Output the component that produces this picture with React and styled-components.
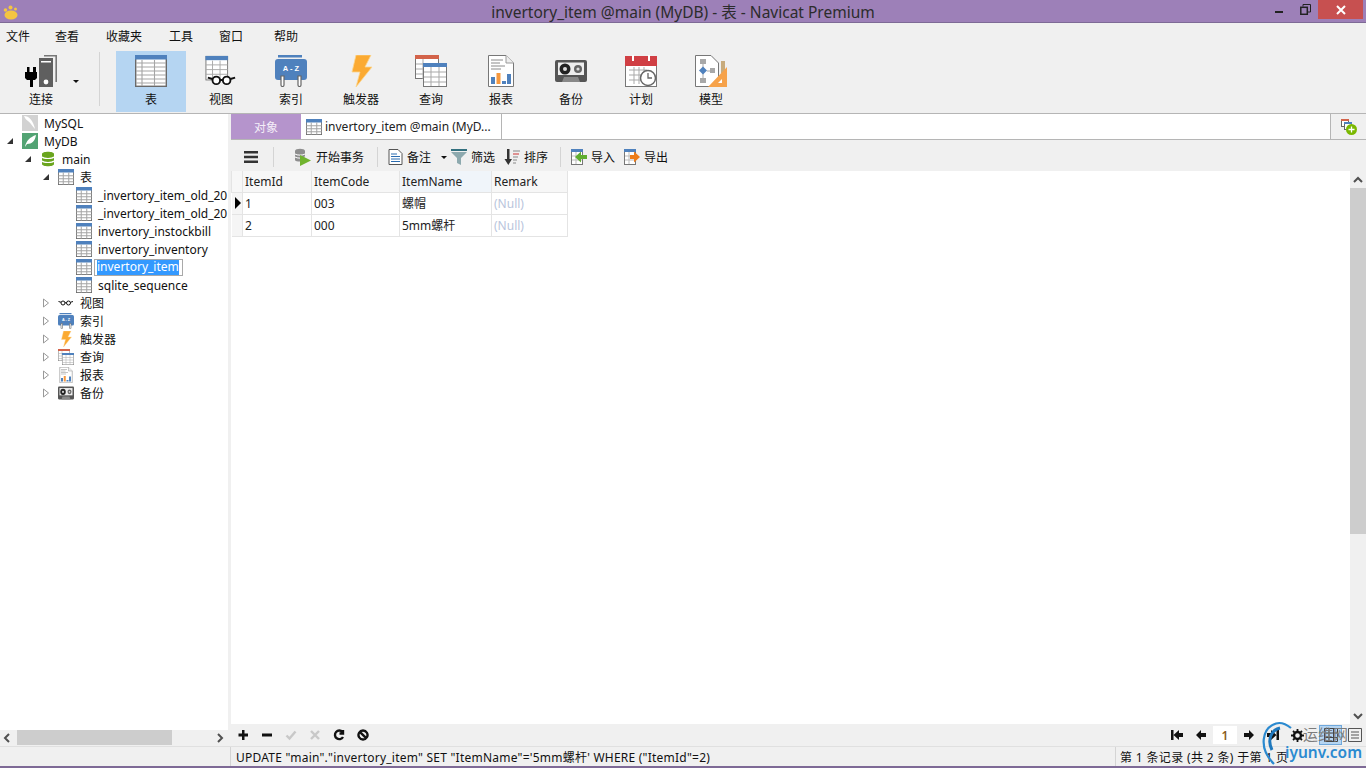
import React from "react";
import styled, { createGlobalStyle } from "styled-components";

const FONT = `"Noto Sans", "Noto Sans CJK SC", sans-serif`;

const Global = createGlobalStyle`
  html, body { margin: 0; padding: 0; background: #f0f0f0; }
  body { font-family: ${FONT}; font-size: 12px; color: #222; overflow: hidden; }
`;

/* ---------- drawn icons ---------- */

const TableIcon = ({ size = 32 }) => (
  <svg width={size} height={size} viewBox="0 0 32 32">
    <rect x="0.700" y="0.700" width="30.600" height="30.600" fill="#fff" stroke="#6a6a6a" strokeWidth={size > 20 ? 1.400 : 2} />
    <rect x="0" y="0" width="32" height={size > 20 ? 4.500 : 7} fill="#4f81bd" />
    {size > 20 ? (
      <path d="M1 8h30M1 12h30M1 16h30M1 20h30M1 24h30M1 28h30M7 5v26M19.500 5v26" stroke="#a5a5a5" strokeWidth="1.100" />
    ) : (
      <path d="M1 13.500h30M1 19.500h30M1 25.500h30M10.500 7v24M21.500 7v24" stroke="#a5a5a5" strokeWidth="2" />
    )}
  </svg>
);

const ViewIcon = ({ size = 32, glassesOnly }) => (
  <svg width={size} height={size} viewBox={glassesOnly ? "2 18 32 16" : "0 0 34 32"}>
    {!glassesOnly && (
      <g>
        <rect x="1" y="0.500" width="23" height="25" fill="#fff" stroke="#777" />
        <rect x="0.500" y="0" width="24" height="4.500" fill="#4f81bd" />
        <path d="M1 9.500h23M1 14.500h23M1 19.500h23M8 5v20M16 5v20" stroke="#a9a9a9" />
      </g>
    )}
    <circle cx="12" cy="26" r="4" fill="#fff" stroke="#111" strokeWidth="2" />
    <circle cx="23" cy="26" r="4" fill="#fff" stroke="#111" strokeWidth="2" />
    <path d="M3 23l5 1.500M16 25.500h3M27 24.500l5-1.500" stroke="#111" strokeWidth="2" />
  </svg>
);

const IndexIcon = ({ size = 32 }) => (
  <svg width={size} height={size} viewBox="0 0 32 32">
    <path d="M3 0h24v2.500H3z" fill="#4f81bd" />
    <rect x="0" y="4" width="32" height="21" rx="3" fill="#4f81bd" />
    <path d="M6 21v9a1.500 1.500 0 0 0 3 0v-9zM23 21v9a1.500 1.500 0 0 0 3 0v-9z" fill="#fff" stroke="#666" strokeWidth="1.200" />
    <text x="16" y="16" textAnchor="middle" fontSize="7.500" fontWeight="700" fill="#fff" fontFamily="Liberation Sans, sans-serif">A - Z</text>
  </svg>
);

const BoltIcon = ({ size = 32 }) => (
  <svg width={size} height={size} viewBox="0 0 32 32">
    <path d="M11 0h15l-6 12h7L11 32l4-15H7z" fill="#fbaa32" stroke="#fcd58e" strokeWidth="0.800" />
  </svg>
);

const QueryIcon = ({ size = 32 }) => (
  <svg width={size} height={size} viewBox="0 0 32 32">
    <rect x="0.500" y="0.500" width="23" height="23" fill="#fff" stroke="#777" />
    <rect x="0" y="0" width="24" height="4" fill="#d3634a" />
    <path d="M1 9h8M1 14h8M1 19h8M8 4v20" stroke="#a9a9a9" />
    <rect x="8.500" y="8.500" width="23" height="23" fill="#fff" stroke="#777" />
    <rect x="8" y="8" width="24" height="4" fill="#4f81bd" />
    <path d="M9 17h22M9 22h22M9 27h22M16 12v19M24 12v19" stroke="#a9a9a9" />
  </svg>
);

const ReportIcon = ({ size = 32 }) => (
  <svg width={size} height={size} viewBox="0 0 32 32">
    <path d="M3.500 0.500H21L28.500 8V31.500H3.500z" fill="#fff" stroke="#777" />
    <path d="M21 0.500V8H28.500" fill="#eee" stroke="#999" />
    <path d="M6 5h12M6 8h9M6 11h14M6 14h10" stroke="#8a8a8a" />
    <rect x="6" y="22" width="4" height="7" fill="#4f81bd" />
    <rect x="11.500" y="18" width="4" height="11" fill="#f6983e" />
    <rect x="17" y="26" width="4" height="3" fill="#4f81bd" />
    <rect x="22" y="19" width="4" height="10" fill="#4f81bd" />
  </svg>
);

const BackupIcon = ({ size = 32 }) => (
  <svg width={size} height={size === 32 ? 24 : 14} viewBox="0 0 32 24" preserveAspectRatio="none">
    <rect x="0" y="1" width="32" height="22" rx="2" fill="#555" />
    <rect x="3" y="3.500" width="26" height="12.500" fill="#eee" />
    <circle cx="10" cy="10" r="5.500" fill="#222" />
    <circle cx="10" cy="10" r="2" fill="#ddd" />
    <circle cx="23" cy="10" r="4" fill="#666" />
    <circle cx="23" cy="10" r="1.600" fill="#ddd" />
    <path d="M7 23l2-5h14l2 5z" fill="#888" />
  </svg>
);

const PlanIcon = ({ size = 32 }) => (
  <svg width={size} height={size} viewBox="0 0 32 32">
    <rect x="0.500" y="2" width="31" height="29.500" fill="#fff" stroke="#777" />
    <rect x="0" y="1" width="32" height="10" fill="#d03f44" />
    <rect x="7" y="0" width="2" height="6" fill="#fff" />
    <rect x="23" y="0" width="2" height="6" fill="#fff" />
    <path d="M4 15h18M4 20h14M4 25h14M9 12v17M14 12v17M19 12v8" stroke="#a9a9a9" />
    <circle cx="23" cy="23" r="7.500" fill="#fff" stroke="#666" strokeWidth="1.500" />
    <path d="M23 18v5h4" fill="none" stroke="#666" strokeWidth="1.300" />
  </svg>
);

const ModelIcon = ({ size = 32 }) => (
  <svg width={size} height={size} viewBox="0 0 32 32">
    <path d="M0.500 0.500H16L23.500 8V31.500H0.500z" fill="#fff" stroke="#777" />
    <rect x="5" y="4" width="6" height="5" fill="#a8a8a8" />
    <rect x="5" y="23" width="6" height="5" fill="#a8a8a8" />
    <rect x="15" y="13" width="5" height="5" fill="#a8a8a8" />
    <path d="M8 9v14M12 16h4" stroke="#a8a8a8" />
    <path d="M8 11.500l4 4-4 4-4-4z" fill="#4f81bd" />
    <rect x="26" y="6" width="4" height="12" fill="#c8ab7c" />
    <path d="M32 12V32H13z" fill="#f6a24a" />
    <path d="M27 24v4h-4z" fill="#fff" />
  </svg>
);

const ConnectIcon = () => (
  <svg width="32" height="32" viewBox="0 0 32 32">
    <path d="M19 .8h12.200V27" fill="none" stroke="#777" strokeWidth="1.600" />
    <rect x="14" y="3" width="14" height="29" fill="#5f5f5f" />
    <rect x="16" y="6" width="10" height="1.500" fill="#fff" />
    <circle cx="21" cy="27" r="2.400" fill="#fff" />
    <path d="M2 12h2.500v5H8v-5h3v5h1v6l-2 2H8v7H5v-7H2l-2-2v-6h2z" fill="#000" />
  </svg>
);

const Triangle = ({ open }) =>
  open ? (
    <svg width="8" height="8" viewBox="0 0 8 8">
      <path d="M7 1v6H1z" fill="#333" />
    </svg>
  ) : (
    <svg width="8" height="10" viewBox="0 0 8 10">
      <path d="M1.500 1l5 4-5 4z" fill="#fff" stroke="#999" />
    </svg>
  );

const SmallTable = () => <TableIcon size={16} />;

const MysqlIcon = () => (
  <svg width="16" height="16" viewBox="0 0 16 16">
    <rect width="16" height="16" fill="#d2d2d2" />
    <path d="M2 1c5 0 9 4 11 13-3-3-4-6-7-8C4 5 3 3 2 1z" fill="#fff" />
  </svg>
);

const MydbIcon = () => (
  <svg width="16" height="16" viewBox="0 0 16 16">
    <rect width="16" height="16" fill="#52a373" />
    <path d="M3 14c1-6 5-10 11-12-1 6-4 9-9 9z" fill="#fff" />
  </svg>
);

const DbIcon = () => (
  <svg width="16" height="16" viewBox="0 0 16 16">
    <path d="M2 3c0-3 12-3 12 0v10c0 3-12 3-12 0z" fill="#6aa51e" />
    <path d="M2 6c2 2 10 2 12 0M2 10c2 2 10 2 12 0" fill="none" stroke="#fff" strokeWidth="1.200" />
  </svg>
);

const MenuLines = () => (
  <svg width="14" height="14" viewBox="0 0 14 14">
    <path d="M0 1h14v2.500H0zM0 5.800h14v2.500H0zM0 10.500h14V13H0z" fill="#333" />
  </svg>
);

const TxIcon = () => (
  <svg width="18" height="18" viewBox="0 0 18 18">
    <path d="M1 3c0-3 10-3 10 0v9c0 2-10 2-10 0z" fill="#8e8e8e" />
    <path d="M1 6c2 1.500 8 1.500 10 0M1 9c2 1.500 8 1.500 10 0" fill="none" stroke="#fff" />
    <path d="M6 7l11 5.500L6 18z" fill="#70b32e" />
  </svg>
);

const NoteIcon = () => (
  <svg width="15" height="16" viewBox="0 0 15 16">
    <path d="M1 .5h9l4 4v11H1z" fill="#fff" stroke="#555" />
    <path d="M3 5h6M3 7.500h9M3 10h9M3 12.500h9" stroke="#2b6cb0" />
  </svg>
);

const FilterIcon = () => (
  <svg width="16" height="16" viewBox="0 0 16 16">
    <rect width="16" height="2" fill="#33707f" />
    <path d="M0 3h16l-6 6v7l-4-2V9z" fill="#8da9ae" />
  </svg>
);

const SortIcon = () => (
  <svg width="16" height="16" viewBox="0 0 16 16">
    <path d="M3 0h2.500v10H8l-3.700 6L.5 10H3z" fill="#333" />
    <path d="M9 2h7" stroke="#888" />
    <path d="M9 5h6" stroke="#c33" />
    <path d="M9 8h5M9 11h4M9 14h3" stroke="#888" />
  </svg>
);

const ImportIcon = ({ color = "#5fae2e", out }) => (
  <svg width="16" height="16" viewBox="0 0 16 16">
    <rect x=".5" y=".5" width="11" height="15" fill="#fff" stroke="#777" />
    <rect y="0" width="12" height="3" fill="#4f81bd" />
    <path d="M1 7h10M1 11h10M5 3v12" stroke="#bbb" />
    <path
      d={out ? "M6 6h4V2.500l6 5.500-6 5.500V10H6z" : "M16 6h-6V2.500L4 8l6 5.500V10h6z"}
      fill={color}
    />
  </svg>
);

const AddObjectIcon = () => (
  <svg width="16" height="16" viewBox="0 0 16 16">
    <rect x=".5" y=".5" width="7" height="7" fill="#fff" stroke="#666" />
    <rect width="8" height="2" fill="#d3634a" />
    <rect x="3.500" y="3.500" width="7" height="7" fill="#fff" stroke="#666" />
    <rect x="3" y="3" width="8" height="2" fill="#4f81bd" />
    <circle cx="10.500" cy="10.500" r="5.500" fill="#7ab800" />
    <path d="M10.500 7.500v6M7.500 10.500h6" stroke="#fff" strokeWidth="1.300" />
  </svg>
);

const Chevron = ({ dir }) => {
  const paths = {
    left: "M6 1L2 5l4 4",
    right: "M3 1l4 4-4 4",
    up: "M1 7l4-4 4 4",
    down: "M1 3l4 4 4-4",
  };
  return (
    <svg width="10" height="10" viewBox="0 0 10 10">
      <path d={paths[dir]} fill="none" stroke="#505050" strokeWidth="2" />
    </svg>
  );
};

const Glyph = ({ d, color = "#111", stroke, w = 12 }) => (
  <svg width={w} height="12" viewBox="0 0 12 12">
    <path
      d={d}
      fill={stroke ? "none" : color}
      stroke={stroke ? color : "none"}
      strokeWidth={stroke ? 2.400 : 0}
    />
  </svg>
);

/* ---------- window chrome ---------- */

const Window = styled.div`
  width: 1366px;
  height: 768px;
  display: flex;
  flex-direction: column;
  background: #f0f0f0;
  position: relative;
  overflow: hidden;
`;

const TitleBar = styled.div`
  height: 22px;
  flex: none;
  background: #9d80b8;
  border-bottom: 1px solid #7e6a96;
  display: grid;
  grid-template-columns: 1fr auto 1fr;
  align-items: center;
`;

const Logo = styled.div`
  padding-left: 3px;
  display: flex;
`;

const Title = styled.div`
  font-size: 15.500px;
  color: #2c2c2c;
  padding-bottom: 1px;
`;

const WinButtons = styled.div`
  display: flex;
  justify-content: flex-end;
  align-self: start;
  padding-right: 3px;
`;

const WinBtn = styled.div`
  width: ${(p) => p.$w}px;
  height: 19px;
  display: flex;
  align-items: center;
  justify-content: center;
  background: ${(p) => (p.$close ? "#c75050" : "transparent")};
`;

const MenuBar = styled.div`
  height: 28px;
  flex: none;
  display: flex;
  align-items: center;
  padding: 0 0 2px 6px;
  box-sizing: border-box;
`;

const MenuItem = styled.div`
  width: ${(p) => p.$w}px;
  font-size: 12px;
  color: #111;
`;

const Ribbon = styled.div`
  height: 61px;
  flex: none;
  display: flex;
  align-items: stretch;
  border-bottom: 1px solid #b5b5b5;
  padding-bottom: 1px;
  box-sizing: content-box;
`;

const ConnectBtn = styled.div`
  width: 99px;
  height: 61px;
  position: relative;
  padding: 4px 0 0 25px;
  box-sizing: border-box;

  svg {
    display: block;
  }
`;

const ConnectLabel = styled.div`
  width: 32px;
  text-align: center;
  margin-top: 5px;
  line-height: 16px;
  color: #111;
`;

const ConnectCaret = styled.div`
  position: absolute;
  left: 73px;
  top: 29px;
  width: 0;
  height: 0;
  border: 3px solid transparent;
  border-top: 3px solid #111;
`;

const RibbonSep = styled.div`
  width: 1px;
  height: 54px;
  margin: 1px 16px 0 0;
  background: #d4d4d4;
`;

const RibbonBtn = styled.div`
  width: 70px;
  height: 61px;
  display: flex;
  flex-direction: column;
  align-items: center;
  padding-top: 4px;
  box-sizing: border-box;
  background: ${(p) => (p.$active ? "#b5d5f2" : "transparent")};
`;

const RibbonIcon = styled.div`
  height: 32px;
  display: flex;
  align-items: center;
  justify-content: center;
`;

const RibbonLabel = styled.div`
  margin-top: 5px;
  line-height: 16px;
  color: #111;
`;

const Body = styled.div`
  flex: 1;
  min-height: 0;
  display: flex;
`;

/* ---------- object tree ---------- */

const Sidebar = styled.div`
  width: 231px;
  flex: none;
  display: flex;
  flex-direction: column;
  padding-right: 3px;
  box-sizing: border-box;
`;

const Tree = styled.div`
  flex: 1;
  min-height: 0;
  background: #fff;
  overflow: hidden;
`;

const TreeRow = styled.div`
  height: 18px;
  display: flex;
  align-items: center;
  padding-left: ${(p) => 4 + p.$level * 18}px;
  white-space: nowrap;
  color: #111;
`;

const Arrow = styled.span`
  width: 18px;
  flex: none;
  display: flex;
  align-items: center;
  padding-left: 2px;
  box-sizing: border-box;
`;

const TreeIcon = styled.span`
  width: 16px;
  height: 16px;
  flex: none;
  display: flex;
  align-items: center;
  justify-content: center;
  margin-right: 6px;
`;

const TreeEdit = styled.span`
  margin-left: -4px;
  border: 1px solid #a9a9a9;
  padding: 0 3px 0 2px;
  height: 15px;
  line-height: 14px;
  display: flex;
  background: #fff;
`;

const TreeEditText = styled.span`
  background: #3399ff;
  color: #fff;
`;

const HScroll = styled.div`
  height: 16px;
  flex: none;
  display: flex;
  align-items: center;
  justify-content: space-between;
  position: relative;
  padding: 0 3px;
`;

const HThumb = styled.div`
  position: absolute;
  left: 17px;
  top: 0;
  width: 155px;
  height: 15px;
  background: #cdcdcd;
`;

/* ---------- main panel ---------- */

const Main = styled.div`
  flex: 1;
  min-width: 0;
  display: flex;
  flex-direction: column;
`;

const TabBar = styled.div`
  height: 26px;
  flex: none;
  display: flex;
  background: #fff;
  border-bottom: 1px solid #b5b5b5;
  box-sizing: border-box;
`;

const ObjectTab = styled.div`
  width: 70px;
  background: #b594cc;
  color: #f4eef8;
  display: flex;
  align-items: center;
  justify-content: center;
  margin-right: 1px;
`;

const DocTab = styled.div`
  width: 200px;
  background: #fff;
  border-right: 1px solid #b5b5b5;
  display: flex;
  align-items: center;
  gap: 3px;
  padding-left: 4px;
  box-sizing: border-box;
  white-space: nowrap;
  color: #222;
`;

const TabFill = styled.div`
  flex: 1;
`;

const TabAdd = styled.div`
  width: 36px;
  background: #f0f0f0;
  border-left: 1px solid #b5b5b5;
  display: flex;
  align-items: center;
  justify-content: center;
  box-sizing: border-box;
`;

const ToolBar = styled.div`
  height: 31px;
  flex: none;
  display: flex;
  align-items: center;
  padding: 2px 0 0 13px;
  box-sizing: border-box;
`;

const ToolBtn = styled.div`
  display: flex;
  align-items: center;
  gap: 4px;
  margin-left: ${(p) => p.$ml || 0}px;
  color: #111;
  white-space: nowrap;
`;

const ToolSep = styled.div`
  width: 1px;
  height: 20px;
  background: #d4d4d4;
  margin-left: ${(p) => p.$ml}px;
`;

const Caret = styled.span`
  width: 0;
  height: 0;
  margin-left: 6px;
  border: 3px solid transparent;
  border-top: 3px solid #111;
  transform: translateY(2px);
`;

const GridPanel = styled.div`
  flex: 1;
  min-height: 0;
  display: flex;
  background: #fff;
`;

const GridScroll = styled.div`
  flex: 1;
  min-width: 0;
`;

const DataTable = styled.table`
  border-collapse: collapse;
  table-layout: fixed;
  width: 336px;
  color: #222;
`;

const HeadCell = styled.th`
  height: 21px;
  padding: 0 0 0 2px;
  background: ${(p) => (p.$current ? "#f0f5fa" : "#f7f7f7")};
  font-weight: 400;
  text-align: left;
  border: 1px solid #e4e4e4;
  border-top: 0;
  box-sizing: border-box;
`;

const Cell = styled.td`
  height: 22px;
  padding: 0 0 0 2px;
  border: 1px solid #e4e4e4;
  box-sizing: border-box;
  color: ${(p) => (p.$null ? "#b9c5dc" : "#222")};
  overflow: hidden;
  white-space: nowrap;
`;

const RowMark = styled.td`
  height: 22px;
  padding: 0 0 0 3px;
  background: #f5f5f5;
  border: 1px solid #e4e4e4;
  border-left: 0;
  box-sizing: border-box;
`;

const RowArrow = styled.div`
  width: 0;
  height: 0;
  border-left: 6px solid #000;
  border-top: 6px solid transparent;
  border-bottom: 6px solid transparent;
`;

const VScroll = styled.div`
  width: 16px;
  flex: none;
  background: #f0f0f0;
  display: flex;
  flex-direction: column;
  align-items: center;
`;

const VEnd = styled.div`
  height: 17px;
  flex: none;
  display: flex;
  align-items: center;
  justify-content: center;
`;

const VThumb = styled.div`
  width: 100%;
  height: 346px;
  background: #cdcdcd;
`;

const VTrack = styled.div`
  flex: 1;
`;

const NavBar = styled.div`
  height: 22px;
  flex: none;
  display: flex;
  align-items: center;
`;

const NavBtn = styled.div`
  width: 24px;
  height: 22px;
  display: flex;
  align-items: center;
  justify-content: center;
  opacity: ${(p) => (p.$off ? 0.25 : 1)};
`;

const NavSpacer = styled.div`
  flex: 1;
`;

const PageInput = styled.div`
  width: 24px;
  height: 18px;
  background: #fff;
  text-align: center;
  line-height: 20px;
  color: #8a5a1a;
  font-weight: 600;
`;

const ViewToggle = styled.div`
  width: 23px;
  height: 20px;
  margin-left: ${(p) => p.$ml || 0}px;
  display: flex;
  align-items: center;
  justify-content: center;
  box-sizing: border-box;
  background: ${(p) => (p.$on ? "#b5d5f2" : "transparent")};
  border: 1px solid ${(p) => (p.$on ? "#6fa8dc" : "transparent")};
`;

/* ---------- status bar ---------- */

const StatusBar = styled.div`
  height: 22px;
  flex: none;
  display: flex;
  align-items: center;
  border-top: 1px solid #e0e0e0;
  border-bottom: 2px solid #7e6a96;
  box-sizing: border-box;
  white-space: nowrap;
`;

const StatusCell = styled.div`
  width: ${(p) => p.$w}px;
  flex: ${(p) => (p.$w ? "none" : 1)};
  height: 100%;
  display: flex;
  align-items: center;
  padding: 1px 0 0 ${(p) => p.$pad || 0}px;
  border-left: ${(p) => (p.$line ? "1px solid #d4d4d4" : "0")};
  box-sizing: border-box;
  color: #111;
  letter-spacing: ${(p) => p.$track || 0}px;
`;

/* ---------- watermark ---------- */

const Watermark = styled.div`
  position: absolute;
  left: 1262px;
  top: 720px;
  width: 104px;
  height: 48px;
  pointer-events: none;
`;

const MarkCn = styled.div`
  position: absolute;
  left: 41px;
  top: 6px;
  font-size: 15px;
  color: #7c7c7c;
  line-height: 16px;
`;

const MarkEn = styled.div`
  position: absolute;
  left: 23px;
  top: 23px;
  font-size: 15.500px;
  font-weight: 600;
  color: #2b8ad0;
  line-height: 18px;
`;

const menus = [
  ["文件", 49],
  ["查看", 51],
  ["收藏夹", 63],
  ["工具", 50],
  ["窗口", 55],
  ["帮助", 40],
];

const ribbon = [
  ["表", <TableIcon />],
  ["视图", <ViewIcon />],
  ["索引", <IndexIcon />],
  ["触发器", <BoltIcon />],
  ["查询", <QueryIcon />],
  ["报表", <ReportIcon />],
  ["备份", <BackupIcon />],
  ["计划", <PlanIcon />],
  ["模型", <ModelIcon />],
];

const tables = [
  "_invertory_item_old_20",
  "_invertory_item_old_20",
  "invertory_instockbill",
  "invertory_inventory",
  "invertory_item",
  "sqlite_sequence",
];

const groups = [
  ["视图", <ViewIcon size={16} glassesOnly />],
  ["索引", <IndexIcon size={16} />],
  ["触发器", <BoltIcon size={16} />],
  ["查询", <QueryIcon size={16} />],
  ["报表", <ReportIcon size={16} />],
  ["备份", <BackupIcon size={16} />],
];

const rows = [
  ["1", "003", "螺帽"],
  ["2", "000", "5mm螺杆"],
];

export default function App() {
  return (
    <Window>
      <Global />
      <TitleBar>
        <Logo>
          <svg width="15" height="15" viewBox="0 0 15 15">
            <ellipse cx="8" cy="10" rx="6.500" ry="4.500" fill="#f4c542" />
            <circle cx="2.500" cy="5" r="1.800" fill="#f4c542" />
            <circle cx="7.500" cy="2.500" r="2" fill="#f4c542" />
            <circle cx="12.500" cy="4" r="1.500" fill="#f4c542" />
          </svg>
        </Logo>
        <Title>invertory_item @main (MyDB) - 表 - Navicat Premium</Title>
        <WinButtons>
          <WinBtn $w={26}>
            <svg width="10" height="10" viewBox="0 0 10 10">
              <rect x="1" y="6" width="8" height="2" fill="#222" />
            </svg>
          </WinBtn>
          <WinBtn $w={26}>
            <svg width="11" height="11" viewBox="0 0 11 11">
              <path d="M3 2.500V.5h7.500V8H8" fill="none" stroke="#222" />
              <rect x=".8" y="3.300" width="6.500" height="7" fill="none" stroke="#222" strokeWidth="1.500" />
            </svg>
          </WinBtn>
          <WinBtn $w={45} $close>
            <svg width="10" height="10" viewBox="0 0 10 10">
              <path d="M1 1l8 8M9 1l-8 8" stroke="#fff" strokeWidth="2" />
            </svg>
          </WinBtn>
        </WinButtons>
      </TitleBar>

      <MenuBar>
        {menus.map(([label, w]) => (
          <MenuItem key={label} $w={w}>{label}</MenuItem>
        ))}
      </MenuBar>

      <Ribbon>
        <ConnectBtn>
          <ConnectIcon />
          <ConnectLabel>连接</ConnectLabel>
          <ConnectCaret />
        </ConnectBtn>
        <RibbonSep />
        {ribbon.map(([label, icon], i) => (
          <RibbonBtn key={label} $active={i === 0}>
            <RibbonIcon>{icon}</RibbonIcon>
            <RibbonLabel>{label}</RibbonLabel>
          </RibbonBtn>
        ))}
      </Ribbon>

      <Body>
        <Sidebar>
          <Tree>
            <TreeRow $level={0}>
              <Arrow />
              <TreeIcon><MysqlIcon /></TreeIcon>
              MySQL
            </TreeRow>
            <TreeRow $level={0}>
              <Arrow><Triangle open /></Arrow>
              <TreeIcon><MydbIcon /></TreeIcon>
              MyDB
            </TreeRow>
            <TreeRow $level={1}>
              <Arrow><Triangle open /></Arrow>
              <TreeIcon><DbIcon /></TreeIcon>
              main
            </TreeRow>
            <TreeRow $level={2}>
              <Arrow><Triangle open /></Arrow>
              <TreeIcon><SmallTable /></TreeIcon>
              表
            </TreeRow>
            {tables.map((name, i) => (
              <TreeRow key={i} $level={3}>
                <Arrow />
                <TreeIcon><SmallTable /></TreeIcon>
                {name === "invertory_item" ? (
                  <TreeEdit><TreeEditText>{name}</TreeEditText></TreeEdit>
                ) : (
                  name
                )}
              </TreeRow>
            ))}
            {groups.map(([label, icon]) => (
              <TreeRow key={label} $level={2}>
                <Arrow><Triangle /></Arrow>
                <TreeIcon>{icon}</TreeIcon>
                {label}
              </TreeRow>
            ))}
          </Tree>
          <HScroll>
            <Chevron dir="left" />
            <HThumb />
            <Chevron dir="right" />
          </HScroll>
        </Sidebar>

        <Main>
          <TabBar>
            <ObjectTab>对象</ObjectTab>
            <DocTab>
              <SmallTable />
              invertory_item @main (MyD...
            </DocTab>
            <TabFill />
            <TabAdd><AddObjectIcon /></TabAdd>
          </TabBar>

          <ToolBar>
            <ToolBtn><MenuLines /></ToolBtn>
            <ToolSep $ml={15} />
            <ToolBtn $ml={20}><TxIcon />开始事务</ToolBtn>
            <ToolSep $ml={13} />
            <ToolBtn $ml={10}><NoteIcon />备注<Caret /></ToolBtn>
            <ToolBtn $ml={4}><FilterIcon />筛选</ToolBtn>
            <ToolBtn $ml={9}><SortIcon />排序</ToolBtn>
            <ToolSep $ml={12} />
            <ToolBtn $ml={10}><ImportIcon />导入</ToolBtn>
            <ToolBtn $ml={9}><ImportIcon out color="#ee7d1a" />导出</ToolBtn>
          </ToolBar>

          <GridPanel>
            <GridScroll>
              <DataTable>
                <colgroup>
                  <col width="11" />
                  <col width="69" />
                  <col width="88" />
                  <col width="92" />
                  <col width="76" />
                </colgroup>
                <thead>
                  <tr>
                    <HeadCell />
                    <HeadCell>ItemId</HeadCell>
                    <HeadCell>ItemCode</HeadCell>
                    <HeadCell $current>ItemName</HeadCell>
                    <HeadCell>Remark</HeadCell>
                  </tr>
                </thead>
                <tbody>
                  {rows.map(([id, code, name], i) => (
                    <tr key={id}>
                      <RowMark>{i === 0 && <RowArrow />}</RowMark>
                      <Cell>{id}</Cell>
                      <Cell>{code}</Cell>
                      <Cell>{name}</Cell>
                      <Cell $null>(Null)</Cell>
                    </tr>
                  ))}
                </tbody>
              </DataTable>
            </GridScroll>
            <VScroll>
              <VEnd><Chevron dir="up" /></VEnd>
              <VThumb />
              <VTrack />
              <VEnd><Chevron dir="down" /></VEnd>
            </VScroll>
          </GridPanel>

          <NavBar>
            <NavBtn><Glyph d="M5 1h2.500v3.500H11v3H7.500V11H5V7.500H1.500v-3H5z" /></NavBtn>
            <NavBtn><Glyph d="M1 4.500h10v3H1z" /></NavBtn>
            <NavBtn $off><Glyph stroke color="#555" d="M1.500 6.500l3 3 6-7" /></NavBtn>
            <NavBtn $off><Glyph stroke color="#555" d="M2 2l8 8M10 2l-8 8" /></NavBtn>
            <NavBtn><Glyph stroke d="M9.500 3A4.300 4.300 0 1 0 10 8M10 1v3.500H6.500" /></NavBtn>
            <NavBtn><Glyph stroke d="M2.800 2.800l6.400 6.400M6 1.500a4.500 4.500 0 1 0 .01 0" /></NavBtn>
            <NavSpacer />
            <NavBtn><Glyph d="M0 1h2.500v10H0zM8 1v3h4v4H8v3L2.500 6z" /></NavBtn>
            <NavBtn><Glyph d="M1 6l5-5v3h5v4H6v3z" /></NavBtn>
            <PageInput>1</PageInput>
            <NavBtn><Glyph d="M11 6L6 1v3H1v4h5v3z" /></NavBtn>
            <NavBtn><Glyph d="M12 1H9.500v10H12zM4 1v3H0v4h4v3l5.500-5z" /></NavBtn>
            <NavBtn>
              <svg width="13" height="13" viewBox="0 0 13 13">
                <circle cx="6.500" cy="6.500" r="3.500" fill="none" stroke="#111" strokeWidth="2.400" />
                <path d="M6.500 0v2.500M6.500 10.500V13M0 6.500h2.500M10.500 6.500H13M2 2l1.700 1.700M9.300 9.300L11 11M2 11l1.700-1.700M9.300 3.700L11 2" stroke="#111" strokeWidth="1.800" />
              </svg>
            </NavBtn>
            <ViewToggle $on $ml={10}>
              <svg width="14" height="14" viewBox="0 0 14 14">
                <path d="M.5.5h13v13H.5zM.5 5h13M.5 9.500h13M5 .5v13M9.500.5v13" fill="none" stroke="#444" />
              </svg>
            </ViewToggle>
            <ViewToggle $ml={1}>
              <svg width="14" height="14" viewBox="0 0 14 14">
                <path d="M.5.5h13v13H.5zM3 4h8M3 7h8M3 10h8" fill="none" stroke="#555" />
              </svg>
            </ViewToggle>
          </NavBar>
        </Main>
      </Body>

      <StatusBar>
        <StatusCell $w={230} />
        <StatusCell $pad={5} $line $track={0.23}>UPDATE "main"."invertory_item" SET "ItemName"='5mm螺杆' WHERE ("ItemId"=2)</StatusCell>
        <StatusCell $w={251} $pad={4} $line $track={0.35}>第 1 条记录 (共 2 条) 于第 1 页</StatusCell>
      </StatusBar>

      <Watermark>
        <svg width="60" height="48" viewBox="0 0 60 48">
          <path d="M12 44C-4 28 0 8 14 3.500 19 2 24 4 29 8" fill="none" stroke="#2b8ad0" strokeWidth="2.200" />
          <path d="M10 30C5 20 9 10 18 8" fill="none" stroke="#1f78bd" strokeWidth="3" />
        </svg>
        <MarkCn>运维网</MarkCn>
        <MarkEn>iyunv.com</MarkEn>
      </Watermark>
    </Window>
  );
}
